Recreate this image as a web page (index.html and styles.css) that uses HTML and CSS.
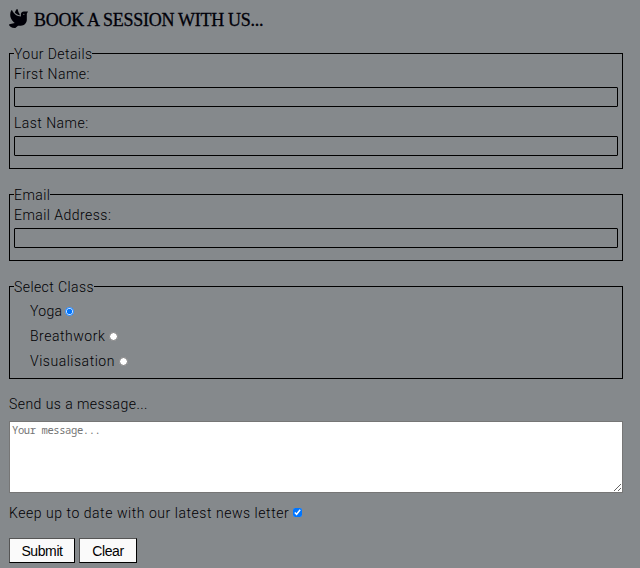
FILE: index.html
```html
<!DOCTYPE html>
<html lang="en">
<head>
<meta charset="utf-8">
<title>Book a session</title>
<link rel="stylesheet" href="styles.css">
</head>
<body>
<form class="booking">
  <h1 class="title">
    <svg class="dove" viewBox="0 0 512 512" aria-hidden="true"><path d="M288 167.200v-28.100c-28.200-36.300-47.100-79.300-54.100-125.200-2.100-13.500-19-18.800-27.800-8.300-21.100 24.900-37.700 54.100-48.900 86.500 34.200 38.300 80 64.600 130.800 75.100zM400 64c-44.200 0-80 35.900-80 80.100v59.400C215.600 197.300 127 133 87 41.800c-5.500-12.500-23.200-13.200-29-.9C41.400 76 32 115.200 32 156.600c0 70.800 34.100 136.900 85.100 185.900 13.200 12.700 26.100 23.200 38.900 32.800l-143.900 36C1.200 414-3.400 426.400 2.600 435.700 20 462.600 63 508.200 155.800 512c8 .3 16-2.600 22.100-7.900l65.200-56.100H320c88.400 0 160-71.500 160-159.900V128l32-64H400zm0 96.100c-8.800 0-16-7.200-16-16s7.200-16 16-16 16 7.200 16 16-7.200 16-16 16z"/></svg>
    <span class="title-text">BOOK A SESSION WITH US...</span>
  </h1>
  <fieldset>
    <legend>Your Details</legend>
    <label class="field"><span>First Name:</span><input type="text"></label>
    <label class="field"><span>Last Name:</span><input type="text"></label>
  </fieldset>
  <fieldset>
    <legend>Email</legend>
    <label class="field"><span>Email Address:</span><input type="email"></label>
  </fieldset>
  <fieldset class="classes">
    <legend>Select Class</legend>
    <label class="option yoga"><span>Yoga</span><input type="radio" name="class" checked></label>
    <label class="option"><span>Breathwork</span><input type="radio" name="class"></label>
    <label class="option"><span>Visualisation</span><input type="radio" name="class"></label>
  </fieldset>
  <label class="message"><span>Send us a message...</span><textarea placeholder="Your message..."></textarea></label>
  <label class="newsletter"><span>Keep up to date with our latest news letter</span><input type="checkbox" checked></label>
  <div class="actions">
    <button type="button" class="submit">Submit</button>
    <button type="button" class="clear">Clear</button>
  </div>
</form>
</body>
</html>
```
FILE: styles.css
```css
* { box-sizing: border-box; }
body {
  margin: 0;
  background: #85898c;
  color: #000003;
  font: 300 14px/22px Roboto, sans-serif;
  letter-spacing: 0.52px;
  overflow: hidden;
}
.booking { width: 614px; margin-left: 9px; }
.title {
  display: flex;
  align-items: center;
  gap: 6px;
  height: 38px;
  margin: 0 0 6px;
  color: #000008;
  font: 400 18px/40px "Liberation Serif", serif;
  letter-spacing: -0.28px;
  -webkit-text-stroke: 0.3px #000008;
}
.title-text { padding-top: 2px; }
.dove { width: 19px; height: 19px; margin-top: -2px; fill: #000008; stroke: none; }
fieldset {
  margin: 0 0 16px;
  padding: 0 4px 12px;
  border: 1px solid #000;
}
legend { height: 19px; padding: 0; line-height: 20px; letter-spacing: 0.42px; }
.field { display: block; }
.field + .field { margin-top: 5px; }
.field span { display: block; height: 24px; letter-spacing: 0.46px; }
.field input {
  display: block;
  width: 100%;
  height: 20px;
  margin: 0;
  padding: 1px 2px;
  border: 1px solid #000;
  border-radius: 1px;
  background: transparent;
}
.classes { padding: 2px 4px 5px 20px; margin-bottom: 14px; }
.classes legend { margin-left: -16px; }
.option { display: flex; align-items: center; height: 25px; gap: 4px; }
.yoga { gap: 3px; letter-spacing: 0.3px; }
input[type="radio"], input[type="checkbox"] { width: 9px; height: 9px; margin: 0; }
input[type="radio"] { margin-top: 1px; }
input[type="checkbox"] { margin-top: -1px; }
.message { display: block; letter-spacing: 0.44px; }
.message span { display: block; height: 28px; }
textarea {
  display: block;
  width: 100%;
  height: 72px;
  margin: 0;
  padding: 1px 2px;
  border: 1px solid #767676;
  background: #fff;
  font: 10.5px/14px "Noto Sans Mono", "DejaVu Sans Mono", monospace;
  letter-spacing: -0.4px;
  resize: both;
}
textarea::placeholder { color: #757575; }
.newsletter { display: flex; align-items: center; gap: 4px; height: 22px; margin-top: 9px; letter-spacing: 0.54px; }
.actions { display: flex; gap: 4px; margin-top: 14px; }
button {
  height: 25px;
  padding: 0;
  border: 1px solid;
  border-color: #555 #000 #000 #555;
  background: #fafafa;
  color: #000;
  font: 400 14px/20px "Liberation Sans", sans-serif;
  letter-spacing: -0.4px;
}
.submit { width: 66px; }
.clear { width: 58px; }
```
